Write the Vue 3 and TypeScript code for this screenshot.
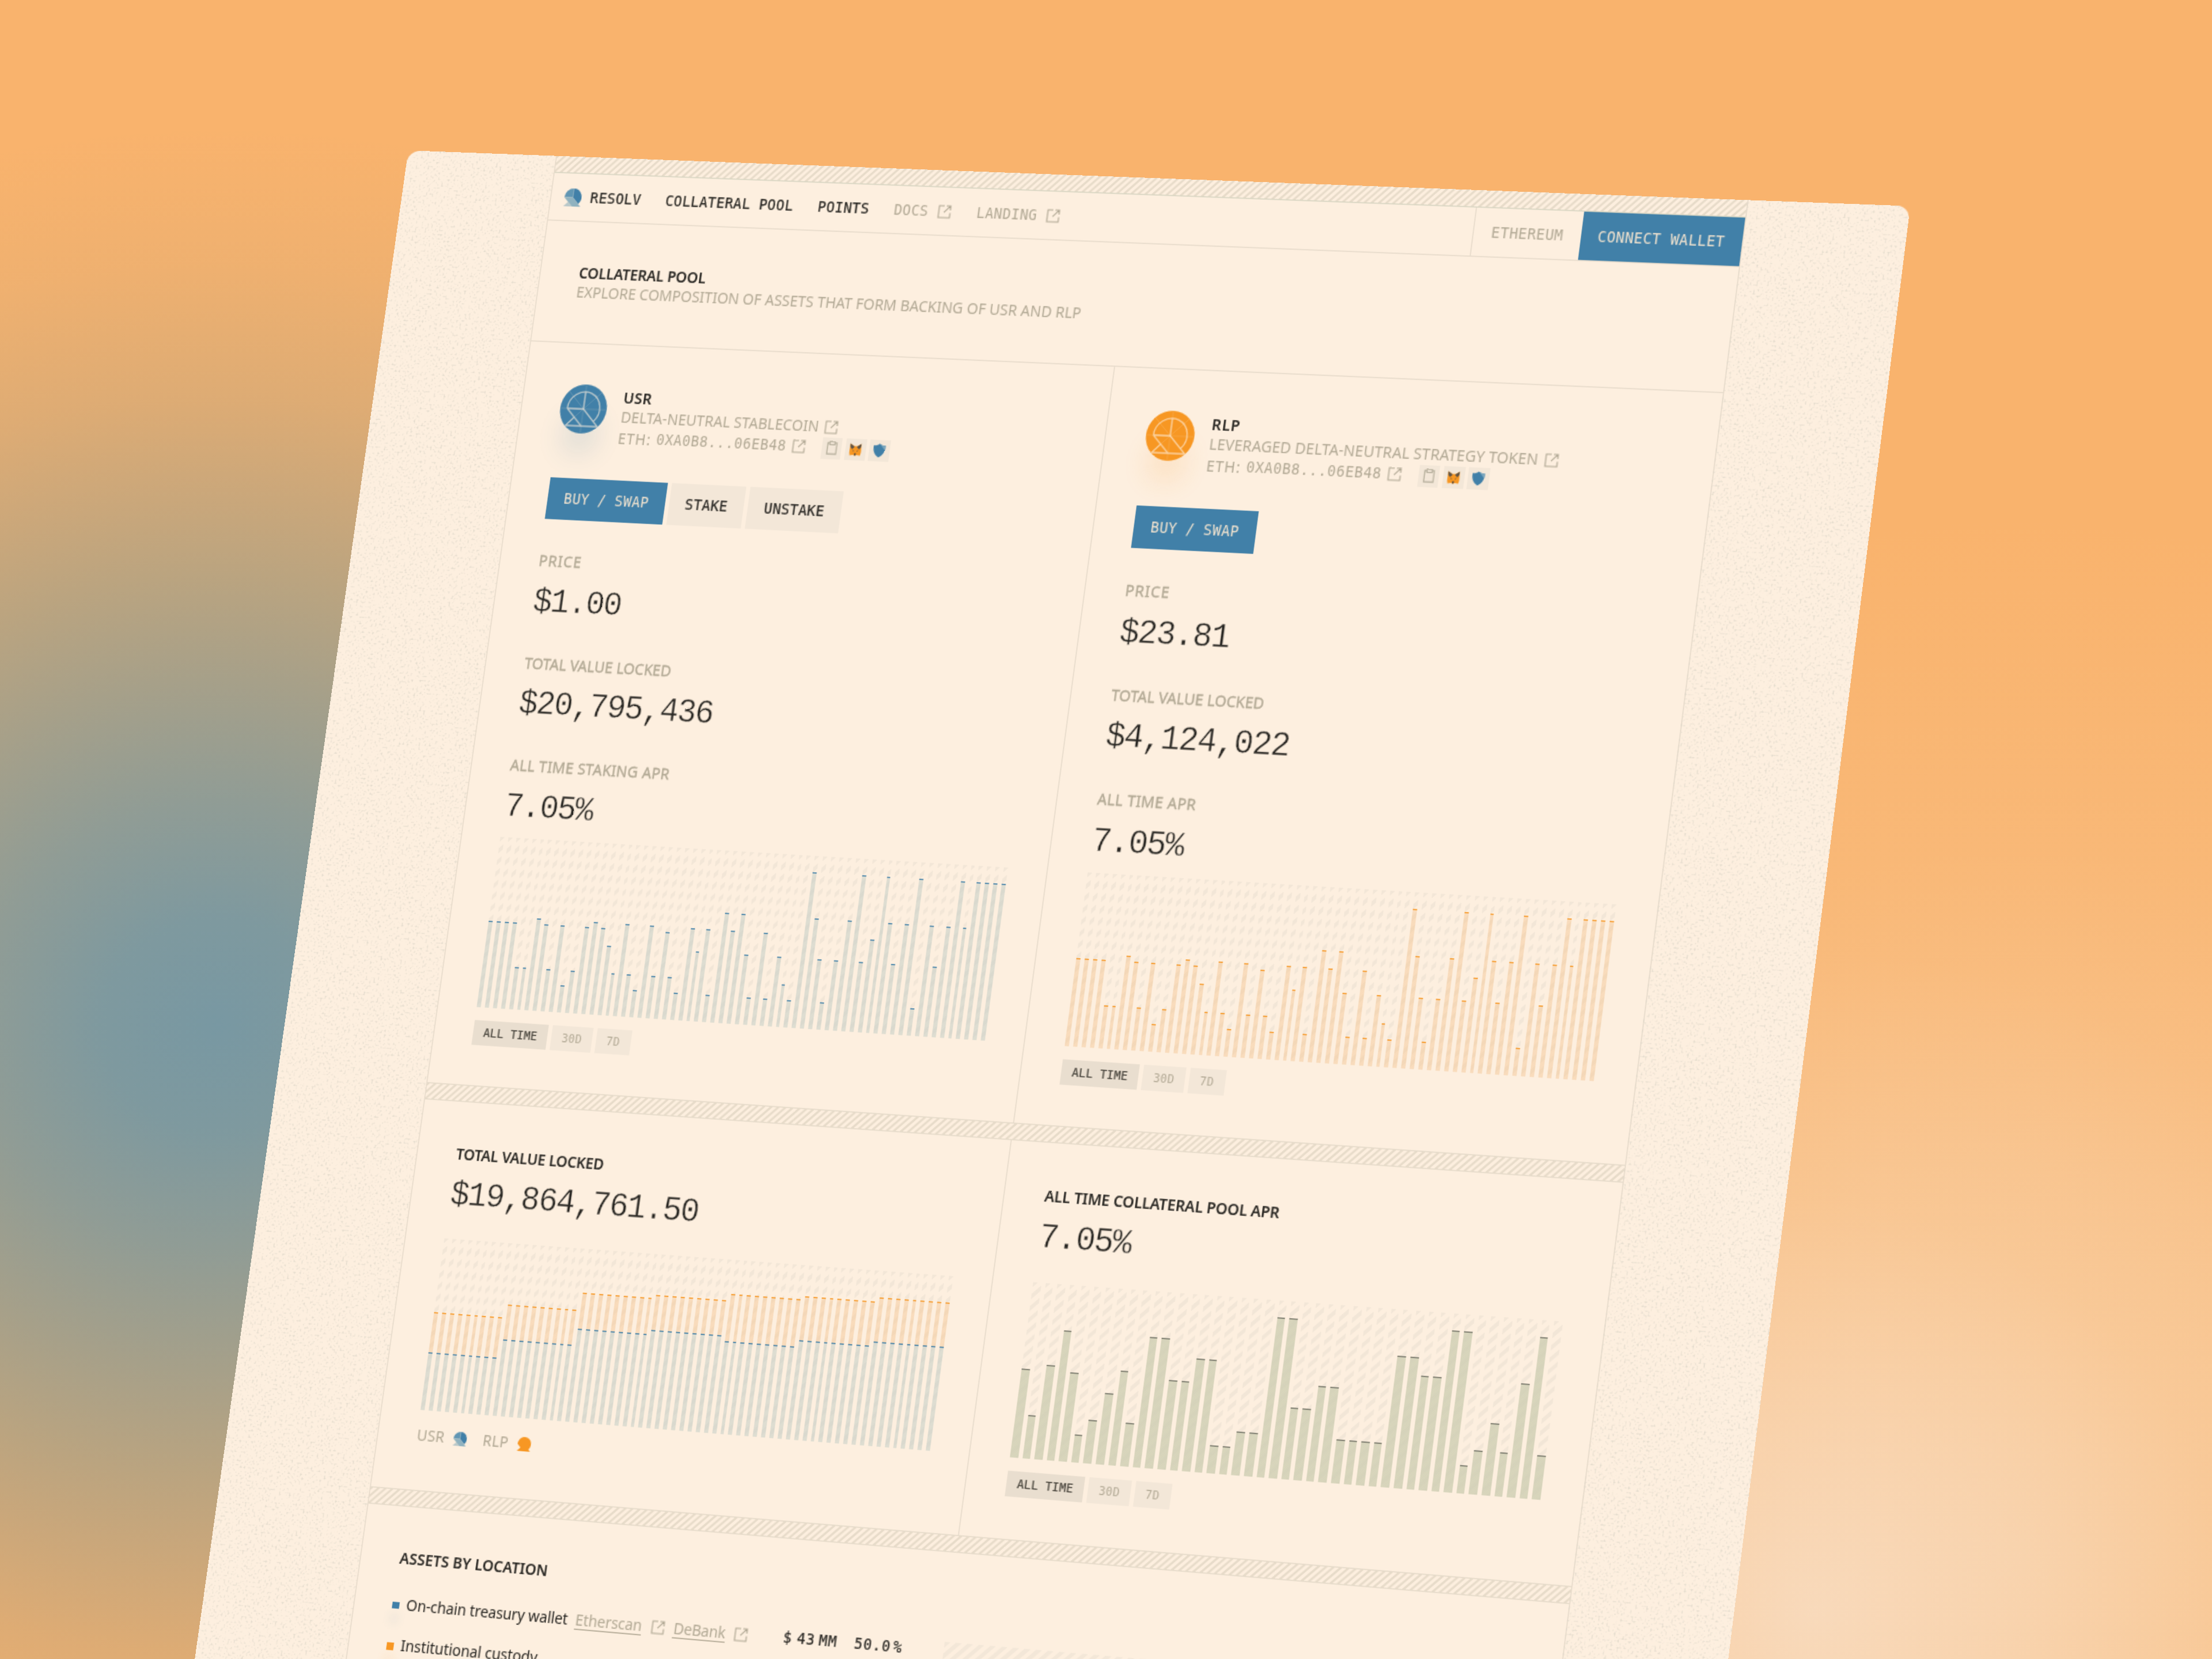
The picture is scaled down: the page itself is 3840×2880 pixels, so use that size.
<script setup lang="ts">
import type { Directive } from 'vue'

interface Asset {
  id: string
  name: string
  nameWidth: number
  tone: 'blue' | 'orange'
  summary: string
  summaryWidth: number
  actions: { label: string; primary?: boolean }[]
  stats: { label: string; width: number; value: string }[]
}

/* Tracks a label so that it fills the given width in px. */
const vFit: Directive<HTMLElement, number> = {
  mounted(el, binding) {
    const count = (el.textContent ?? '').trim().length
    if (!count) return
    el.style.letterSpacing = `${(binding.value - el.offsetWidth) / count}px`
  },
}

const assets: Asset[] = [
  {
    id: 'usr',
    name: 'USR',
    nameWidth: 28,
    tone: 'blue',
    summary: 'DELTA-NEUTRAL STABLECOIN',
    summaryWidth: 194.5,
    actions: [{ label: 'BUY / SWAP', primary: true }, { label: 'STAKE' }, { label: 'UNSTAKE' }],
    stats: [
      { label: 'PRICE', width: 43, value: '$1.00' },
      { label: 'TOTAL VALUE LOCKED', width: 144.5, value: '$20,795,436' },
      { label: 'ALL TIME STAKING APR', width: 156.5, value: '7.05%' },
    ],
  },
  {
    id: 'rlp',
    name: 'RLP',
    nameWidth: 27,
    tone: 'orange',
    summary: 'LEVERAGED DELTA-NEUTRAL STRATEGY TOKEN',
    summaryWidth: 309,
    actions: [{ label: 'BUY / SWAP', primary: true }],
    stats: [
      { label: 'PRICE', width: 43, value: '$23.81' },
      { label: 'TOTAL VALUE LOCKED', width: 145, value: '$4,124,022' },
      { label: 'ALL TIME APR', width: 93.5, value: '7.05%' },
    ],
  },
]

const apr: number[] = [
  50.9, 50.9, 50.9, 50.9, 24.7, 24.7, 54.1, 50.9, 24.7, 50.9, 16, 24.7, 50.9, 54.1, 50.9, 40.7,
  24.7, 54.1, 24.7, 16, 54.1, 24.7, 50.9, 24.7, 16, 54.1, 40.7, 54.1, 16, 64.3, 54.1, 64.3,
  40.7, 16, 54.1, 16, 40.7, 24.7, 16, 90.6, 64.3, 40.7, 16, 40.7, 64.3, 90.6, 40.7, 54.1,
  90.6, 64.3, 40.7, 64.3, 90.6, 16, 64.3, 40.7, 64.3, 90.6, 64.3, 90.6, 90.6, 90.6, 90.6,
]

const poolApr: number[] = [
  50.9, 25, 54.3, 74.1, 50.9, 16, 25, 40.9, 54.3, 25, 74.1, 74.1, 50.9, 50.9, 64.4, 64.4, 16.1,
  16.1, 25, 25, 90.6, 90.6, 40.9, 40.9, 54.2, 54.2, 25, 25, 25, 25, 74.1, 74.1, 64.3, 64.3,
  90.6, 90.6, 16.1, 25, 40.9, 25, 64.3, 90.5, 25,
]

const tvlSteps = [
  { usr: 33.6, total: 57.3 },
  { usr: 44.5, total: 65.1 },
  { usr: 54.3, total: 74.7 },
  { usr: 56.6, total: 77.1 },
  { usr: 53.4, total: 80.7 },
  { usr: 57.1, total: 82.4 },
  { usr: 59.8, total: 85.3 },
]
const tvl = tvlSteps.flatMap((step) => Array.from({ length: 9 }, () => step))

const ranges = ['ALL TIME', '30D', '7D']
</script>

<template>
  <main class="scene">
    <svg class="defs" width="0" height="0" aria-hidden="true">
      <defs>
        <symbol id="ext" viewBox="0 0 13 13">
          <path d="M6 1H1v11h11V7.500M6 7.200l5.600-6M8 1h4v4" fill="none" stroke="currentColor" stroke-width="1.1" />
        </symbol>
        <symbol id="coin" viewBox="-23 -23 46 46">
          <circle r="23" fill="currentColor" />
          <path d="M-23 0H23M0-23V23M-16.200-16.200l32.400 32.400M16.200-16.200l-32.400 32.400" stroke="#fdefdf" stroke-opacity=".3" stroke-width=".5" />
          <path d="M-16 0A16 16 0 1 1 11.300 11.300M0-16V0M-16 0H0L16 16H-15.600L-8 8M-16 0L0 16" fill="none" stroke="#fdefdf" stroke-opacity=".62" stroke-width="1.3" />
        </symbol>
        <symbol id="mark-blue" viewBox="-16 -16 32 32">
          <path d="M0-16A16 16 0 0 1 11.300 11.300L0 0Z" fill="#4180a8" />
          <path d="M0-16A16 16 0 0 0-16 0H0Z" fill="#6196b3" />
          <path d="M-16 0H0L16 16H0Z" fill="#90b2bf" />
          <path d="M-8 8L0 16H-16Z" fill="#b9c8c9" />
        </symbol>
        <symbol id="mark-orange" viewBox="-16 -16 32 32">
          <path d="M-16 0A16 16 0 1 1 11.300 11.300L16 16H-16L-8 8Z" fill="#f79723" />
        </symbol>
        <filter id="grain" x="0" y="0" width="100%" height="100%">
          <feTurbulence type="fractalNoise" baseFrequency=".5" numOctaves="2" seed="7" />
          <feColorMatrix values="0 0 0 0 .76  0 0 0 0 .7  0 0 0 0 .6  4.6 0 0 0 -2.6" />
        </filter>
      </defs>
    </svg>

    <div class="page">
      <aside class="gutter">
        <svg width="100%" height="100%"><rect width="100%" height="100%" filter="url(#grain)" /></svg>
      </aside>

      <div class="content">
        <div class="hatch hatch-top"></div>

        <header class="nav mono">
          <svg class="brand"><use href="#mark-blue" /></svg>
          <span class="nav-item">RESOLV</span>
          <span class="nav-item">COLLATERAL POOL</span>
          <span class="nav-item">POINTS</span>
          <span class="nav-item muted">DOCS<svg class="ext"><use href="#ext" /></svg></span>
          <span class="nav-item muted">LANDING<svg class="ext"><use href="#ext" /></svg></span>
          <span class="network">ETHEREUM</span>
          <span class="connect">CONNECT WALLET</span>
        </header>

        <section class="intro">
          <div><span v-fit="125" class="title">COLLATERAL POOL</span></div>
          <div><span v-fit="493" class="muted">EXPLORE COMPOSITION OF ASSETS THAT FORM BACKING OF USR AND RLP</span></div>
        </section>

        <section class="split">
          <article v-for="asset in assets" :key="asset.id" class="cell" :class="asset.tone">
            <div class="asset">
              <div class="coin"><svg><use href="#coin" /></svg></div>
              <div class="asset-info">
                <div class="line"><span v-fit="asset.nameWidth" class="title">{{ asset.name }}</span></div>
                <div class="line muted">
                  <span v-fit="asset.summaryWidth">{{ asset.summary }}</span>
                  <svg class="ext near"><use href="#ext" /></svg>
                </div>
                <div class="line muted">
                  <span v-fit="33" class="chain">ETH:</span>
                  <span class="mono address">0XA0B8...06EB48</span>
                  <svg class="ext near"><use href="#ext" /></svg>
                  <div class="chips">
                    <i class="chip">
                      <svg viewBox="0 0 20 20">
                        <path d="M7.500 5H5.500v10.500h9V5h-2M7.500 3.800h5v2.800h-5z" fill="none" stroke="#b5ae9b" stroke-width="1.1" />
                      </svg>
                    </i>
                    <i class="chip">
                      <svg viewBox="0 0 20 20">
                        <path d="M4.500 4.500L8.500 7h3l4-2.500.3 8-.6 3.500-3.600-.6-.8.6H9.200L8.400 15.400l-3.600.6-.6-3.500z" fill="#f79723" />
                        <path d="M4.500 4.500L9 7.800 6.500 10 4.800 8zM15.500 4.500L11 7.800 13.500 10 15.200 8z" fill="#5b5248" />
                        <path d="M7.300 11l1.200.6M12.700 11l-1.200.6" stroke="#5b5248" stroke-width=".8" />
                        <path d="M9 13.800h2l-.4 2H9.400z" fill="#4a453d" />
                      </svg>
                    </i>
                    <i class="chip">
                      <svg viewBox="0 0 20 20">
                        <path d="M10 3.700c1.900 1.300 3.800 1.700 5.900 1.700 0 5.600-1.100 8.600-5.900 11.200C5.200 14 4.100 11 4.100 5.400 6.200 5.400 8.100 5 10 3.700z" fill="#4180a8" />
                        <path d="M10.500 4c1.700 1.100 3.500 1.400 5.400 1.400 0 1.600 0 3-.4 4.300z" fill="#7ba6bd" />
                      </svg>
                    </i>
                  </div>
                </div>
              </div>
            </div>

            <div class="actions mono">
              <span v-for="action in asset.actions" :key="action.label" class="button" :class="{ primary: action.primary }">{{ action.label }}</span>
            </div>

            <div v-for="stat in asset.stats" :key="stat.label" class="stat">
              <div class="label"><span v-fit="stat.width" class="muted medium">{{ stat.label }}</span></div>
              <div class="value">{{ stat.value }}</div>
            </div>

            <div class="chart">
              <div v-for="(height, i) in apr" :key="i" class="track">
                <div class="bar" :style="{ height: `${height}%` }"></div>
              </div>
            </div>

            <div class="tabs mono">
              <span v-for="(range, i) in ranges" :key="range" class="tab" :class="{ active: i === 0 }">{{ range }}</span>
            </div>
          </article>
        </section>

        <div class="hatch"></div>

        <section class="split summary">
          <article class="cell">
            <div class="label"><span v-fit="145.5" class="title">TOTAL VALUE LOCKED</span></div>
            <div class="value">$19,864,761.50</div>
            <div class="chart">
              <div v-for="(day, i) in tvl" :key="i" class="track">
                <div class="bar orange" :style="{ height: `${day.total - day.usr}%` }"></div>
                <div class="bar blue" :style="{ height: `${day.usr}%` }"></div>
              </div>
            </div>
            <div class="legend muted">
              <span v-fit="27.5">USR</span>
              <svg><use href="#mark-blue" /></svg>
              <span v-fit="26" class="second">RLP</span>
              <svg><use href="#mark-orange" /></svg>
            </div>
          </article>

          <article class="cell olive">
            <div class="label"><span v-fit="221.5" class="title">ALL TIME COLLATERAL POOL APR</span></div>
            <div class="value">7.05%</div>
            <div class="chart">
              <div v-for="(height, i) in poolApr" :key="i" class="track">
                <div class="bar" :style="{ height: `${height}%` }"></div>
              </div>
            </div>
            <div class="tabs mono">
              <span v-for="(range, i) in ranges" :key="range" class="tab" :class="{ active: i === 0 }">{{ range }}</span>
            </div>
          </article>
        </section>

        <div class="hatch"></div>

        <section class="locations">
          <div class="label"><span v-fit="145" class="title">ASSETS BY LOCATION</span></div>
          <div class="location-body">
            <div class="list">
              <div class="row blue">
                <i class="dot"></i>
                <span v-fit="157.5">On-chain treasury wallet</span>
                <span v-fit="64.5" class="muted link first">Etherscan</span>
                <svg class="ext"><use href="#ext" /></svg>
                <span v-fit="50" class="muted link">DeBank</span>
                <svg class="ext last"><use href="#ext" /></svg>
                <span class="mono amount">$</span>
                <span class="mono figure">43</span>
                <span class="mono unit">MM</span>
                <span class="mono share">50.0</span>
                <span class="mono">%</span>
              </div>
              <div class="row orange">
                <i class="dot"></i>
                <span v-fit="134">Institutional custody</span>
              </div>
            </div>
            <div class="plot"></div>
          </div>
        </section>
      </div>

      <aside class="gutter">
        <svg width="100%" height="100%"><rect width="100%" height="100%" filter="url(#grain)" /></svg>
      </aside>
    </div>
  </main>
</template>

<style>
body {
  margin: 0;
}
</style>

<style scoped>
.scene {
  position: relative;
  width: 3840px;
  height: 2880px;
  overflow: hidden;
  background:
    radial-gradient(ellipse 1150px 1150px at 3150px 2800px, rgba(248, 221, 194, 0.85) 0%, rgba(248, 218, 188, 0.6) 30%, rgba(248, 211, 172, 0.25) 62%, rgba(248, 205, 160, 0) 100%),
    radial-gradient(ellipse 1700px 1800px at 3500px 2700px, rgba(248, 208, 165, 0.8) 0%, rgba(248, 204, 158, 0.6) 38%, rgba(248, 196, 142, 0.3) 68%, rgba(249, 179, 109, 0) 100%),
    radial-gradient(
      ellipse 1700px 1560px at 380px 1780px,
      rgba(116, 151, 164, 0.97) 0%,
      rgba(116, 151, 163, 0.92) 12%,
      rgba(116, 150, 160, 0.79) 25%,
      rgba(114, 148, 155, 0.61) 38.5%,
      rgba(112, 146, 150, 0.46) 50%,
      rgba(112, 144, 148, 0.33) 60%,
      rgba(112, 142, 145, 0.2) 70%,
      rgba(112, 142, 145, 0.07) 85%,
      rgba(112, 142, 145, 0) 100%
    ),
    #f9b36d;
  color: #2a2824;
  font-family: 'Noto Sans', 'Liberation Sans', sans-serif;
}

.defs {
  position: absolute;
}

.page {
  display: flex;
  width: 1438px;
  height: 1500px;
  border-radius: 12px;
  overflow: hidden;
  background: #fdefdf;
  font-size: 14px;
  line-height: 18.6px;
  transform-origin: 0 0;
  transform: matrix3d(1.70864, 0.055254, 0, -0.0000343649, -0.267887, 1.83301, 0, -0.0000113677, 0, 0, 1, 0, 712.413, 262.467, 0, 1.00512037);
}

.gutter {
  flex: 0 0 149px;
}

.gutter svg {
  display: block;
}

.content {
  flex: 0 0 1140px;
  box-sizing: border-box;
  box-shadow: 0 0 0 1px #e7dbcb;
  background: #fdefdf;
}

.mono {
  font-family: 'DejaVu Sans Mono', 'Liberation Mono', monospace;
  font-size: 13.4px;
  letter-spacing: 0.33px;
}

.muted {
  color: #b2a995;
}

.title {
  font-weight: 600;
}

.medium {
  -webkit-text-stroke: 0.3px currentColor;
}

span {
  white-space: nowrap;
}

.hatch {
  height: 15.5px;
  box-sizing: border-box;
  border-top: 1px solid #e6dbca;
  border-bottom: 1px solid #e6dbca;
  background: repeating-linear-gradient(135deg, #e7dbc9 0 1.5px, #fdefdf 2px 4.2px, #e7dbc9 4.75px);
}

.hatch-top {
  height: 16px;
  border-top: 0;
  border-bottom: 1.5px solid #d9d6c3;
}

.nav {
  display: flex;
  align-items: center;
  height: 44px;
  border-bottom: 1px solid #e7dbcb;
}

.nav-item {
  display: flex;
  align-items: center;
  margin-right: 24px;
  padding-top: 2px;
  -webkit-text-stroke: 0.2px currentColor;
}

.nav-item.muted {
  -webkit-text-stroke: 0;
}

.brand {
  width: 17px;
  height: 17px;
  margin: 0 9.3px 0 12.5px;
}

.ext {
  flex: none;
  width: 13px;
  height: 13px;
  color: #b2a995;
}

.nav-item .ext {
  margin: -1px 0.5px 0 9px;
}

.network,
.connect {
  height: 44px;
  padding: 0 16px;
  line-height: 46px;
}

.network {
  margin-left: auto;
  border-left: 1px solid #e7dbcb;
  color: #b2a995;
}

.connect {
  background: #4180a8;
  color: #f0e2cf;
}

.intro {
  padding: 38.9px 38px 37.1px;
  border-bottom: 1px solid #e7dbcb;
}

.split {
  display: grid;
  grid-template-columns: 570px 570px;
}

.cell {
  box-sizing: border-box;
  height: 692px;
  padding: 38px;
}

.cell + .cell {
  box-shadow: -1px 0 0 #e7dbcb;
}

.blue {
  --tone: #4180a8;
  --fill: rgba(201, 208, 200, 0.6);
}

.orange {
  --tone: #f79723;
  --fill: rgba(245, 203, 158, 0.55);
}

.olive {
  --tone: #77776a;
  --fill: rgba(209, 208, 182, 0.86);
}

.asset {
  display: flex;
}

.coin {
  width: 46px;
  height: 46px;
  border-radius: 50%;
  color: var(--tone);
  box-shadow: 0 24px 24px -4px color-mix(in srgb, var(--tone) 14%, transparent);
}

.coin svg {
  display: block;
  width: 46px;
  height: 46px;
}

.asset-info {
  padding: 1.7px 0 0 15px;
}

.line {
  display: flex;
  align-items: center;
  height: 18.6px;
}

.line:last-child {
  height: 19.5px;
}

.near {
  margin-left: 6px;
}

.chain {
  margin-right: 5px;
}

.address {
  letter-spacing: 0.45px;
}

.chips {
  display: flex;
  gap: 3.7px;
  margin-left: 15.5px;
}

.chip {
  width: 19.5px;
  height: 19.5px;
  background: #f3e7d8;
}

.chip svg {
  display: block;
}

.actions {
  display: flex;
  gap: 3.6px;
  margin-top: 29.6px;
}

.button {
  height: 38.6px;
  padding: 0 16px;
  line-height: 40px;
  background: #f3e7d8;
  -webkit-text-stroke: 0.2px currentColor;
}

.primary {
  background: #4180a8;
  color: #f0e2cf;
  -webkit-text-stroke: 0;
}

.stat {
  margin-top: 27.8px;
}

.actions + .stat {
  margin-top: 30.7px;
}

.label {
  height: 18.6px;
}

.value {
  height: 38px;
  margin-top: 11px;
  font-family: 'Liberation Mono', monospace;
  font-size: 31px;
  line-height: 36.4px;
  letter-spacing: -1.27px;
  -webkit-text-stroke: 0.35px #fdefdf;
}

.chart {
  display: flex;
  gap: 4px;
  height: 158px;
  margin-top: 8.5px;
}

.track {
  display: flex;
  flex: 1 1 0;
  flex-direction: column;
  justify-content: flex-end;
  background: repeating-linear-gradient(135deg, #f2e6d7 0 3px, #fdefdf 3.4px 7.3px, #f2e6d7 7.68px);
}

.bar {
  box-sizing: border-box;
  border-top: 1.4px solid var(--tone);
  background: linear-gradient(var(--fill), var(--fill)) padding-box;
}

.tabs {
  display: flex;
  gap: 3.6px;
  margin-top: 11.6px;
  font-size: 10.6px;
  letter-spacing: 0.25px;
}

.tab {
  height: 22.8px;
  padding: 0 10.2px;
  line-height: 22.8px;
  background: #f3e7d8;
  color: #b2a995;
}

.tab.active {
  background: #e9decf;
  color: #4a463e;
  -webkit-text-stroke: 0.2px currentColor;
}

.summary .cell {
  height: 357.5px;
  padding-top: 38.9px;
}

.summary .chart {
  margin-top: 20.2px;
}

.legend {
  display: flex;
  align-items: center;
  height: 22.8px;
  margin-top: 11.6px;
}

.legend svg {
  width: 13px;
  height: 13px;
  margin-left: 8.5px;
}

.legend .second {
  margin-left: 16px;
}

.locations {
  padding: 38.6px 38px 0;
}

.location-body {
  display: flex;
  margin-top: 23px;
}

.list {
  flex: 0 0 532px;
}

.row {
  display: flex;
  align-items: center;
  height: 18.6px;
  margin-bottom: 19px;
}

.dot {
  width: 6.6px;
  height: 6.6px;
  margin: 2px 6.8px 0 -0.6px;
  background: var(--tone);
  box-shadow: 0 12px 10px color-mix(in srgb, var(--tone) 14%, transparent);
}

.link {
  border-bottom: 1px solid #b2a995;
  line-height: 17px;
}

.first {
  margin-left: 7.5px;
}

.row .ext {
  margin: 0 8.8px 0 8.7px;
}

.row .last {
  margin-right: 33.7px;
}

.row .mono {
  padding-top: 1px;
  letter-spacing: 0.7px;
  -webkit-text-stroke: 0.2px currentColor;
}

.amount {
  margin-right: 4.5px;
}

.figure {
  margin-right: 3.5px;
}

.unit {
  margin-right: 16.3px;
}

.share {
  margin-right: 2px;
}

.plot {
  flex: 1;
  height: 160px;
  background: repeating-linear-gradient(135deg, #f3e7d8 0 3.5px, #fdefdf 3.9px 7.3px, #f3e7d8 7.68px);
}
</style>
